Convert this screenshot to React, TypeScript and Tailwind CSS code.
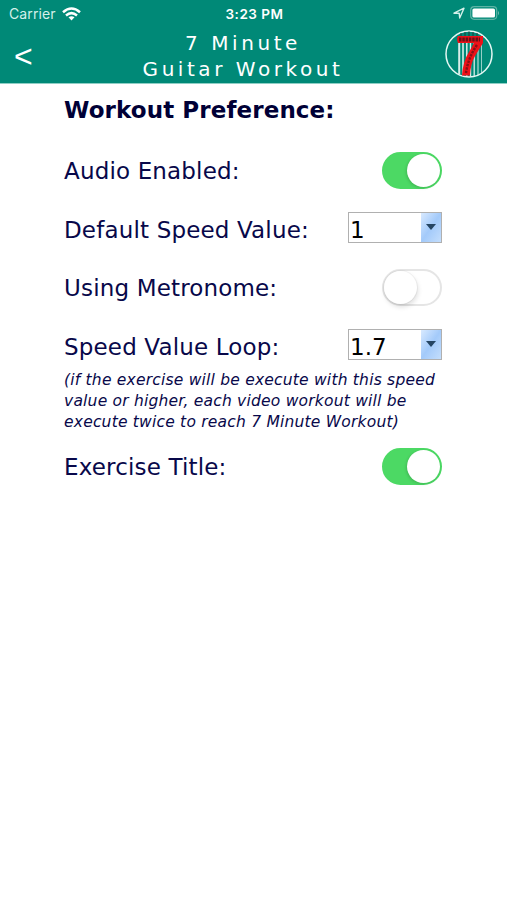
import React, { useState } from 'react';
import clsx from 'clsx';

interface ToggleProps {
  label: string;
  checked: boolean;
  onChange: (checked: boolean) => void;
}

const Toggle: React.FC<ToggleProps> = ({ label, checked, onChange }) => (
  <button
    type="button"
    role="switch"
    aria-label={label}
    aria-checked={checked}
    onClick={() => onChange(!checked)}
    className={clsx(
      'flex h-[37px] w-[60px] items-center rounded-full border-2',
      checked ? 'justify-end border-[#4cd964] bg-[#4cd964]' : 'justify-start border-[#e5e5e5] bg-white'
    )}
  >
    <span
      className={clsx(
        'size-[33px] rounded-full bg-white',
        checked
          ? 'shadow-[-1px_1px_3px_rgba(0,0,0,0.15)]'
          : 'shadow-[0_0_0_1px_rgba(0,0,0,0.04),1px_3px_5px_rgba(0,0,0,0.13)]'
      )}
    />
  </button>
);

const SpeedSelect: React.FC<{ value: string }> = ({ value }) => (
  <button
    type="button"
    className="mb-[4px] flex h-[31px] w-[94px] items-stretch border border-[#b0b0b0] bg-white"
  >
    <span className="flex-1 pl-px pt-[3px] text-left text-[23px] leading-[29px] text-black">{value}</span>
    <span className="flex w-5 items-center justify-center bg-linear-to-br from-[#d9eaff] via-[#a3cafa] to-[#c4defc]">
      <svg width="12" height="8" viewBox="0 0 12 8">
        <path d="M1 1h10L6 7z" fill="#254563" />
      </svg>
    </span>
  </button>
);

interface RowProps {
  label: string;
  children: React.ReactNode;
}

const Row: React.FC<RowProps> = ({ label, children }) => (
  <div className="flex h-[58.5px] items-center justify-between">
    <span className="whitespace-nowrap pt-px text-[23px] leading-7 tracking-[0.16px]">{label}</span>
    {children}
  </div>
);

const StatusBar: React.FC = () => (
  <div className="flex h-7 items-center justify-between pl-[9px] pr-[7px] font-[Inter,sans-serif] text-[14px] text-white">
    <div className="flex w-[90px] items-center gap-[6px] pb-px">
      <span className="tracking-[0.1px] text-[#d4f0ea]">Carrier</span>
      <svg width="19" height="14" viewBox="0 0 19 14" fill="none" stroke="white" strokeWidth="2.5" className="shrink-0">
        <path d="M1 5.2Q9.5 -2.2 18 5.2" />
        <path d="M4 8.5Q9.5 3.8 15 8.5" />
        <path d="M6.5 10.3Q9.5 8 12.5 10.3L9.5 13.5z" fill="white" stroke="none" />
      </svg>
    </div>
    <span className="text-[13.5px] font-semibold tracking-[0.5px]">3:23 PM</span>
    <div className="flex w-[90px] items-center justify-end gap-[5px] pb-[2px]">
      <svg width="12" height="12" viewBox="0 0 12 12" fill="none" stroke="#d4f0ea" strokeWidth="1.4" strokeLinejoin="round">
        <path d="M1 6.2L11 1.2L6.7 11L6.2 6.3z" />
      </svg>
      <svg width="30" height="14" viewBox="0 0 30 14">
        <rect x="0.7" y="0.7" width="26" height="12.6" rx="3.5" fill="none" stroke="#5db3a5" strokeWidth="1.2" />
        <rect x="2.4" y="2.4" width="22.6" height="9.2" rx="1.6" fill="white" />
        <path d="M28 4.7Q30 7 28 9.3z" fill="#70bbaf" />
      </svg>
    </div>
  </div>
);

const Logo: React.FC = () => (
  <svg width="50" height="50" viewBox="0 0 50 50" className="mb-1">
    <circle cx="25" cy="25" r="23" fill="none" stroke="#e4f7f3" strokeWidth="1.5" />
    {/* Guitar strings */}
    <g stroke="#d8eee9">
      <path d="M15.2 12V45" strokeWidth="2" />
      <path d="M19 12V46" strokeWidth="1.6" />
      <path d="M22.8 12V47" strokeWidth="1.5" />
      <path d="M26.5 12V47" strokeWidth="1.4" />
      <path d="M30.2 12V47" strokeWidth="1.3" />
      <path d="M34 12V46" strokeWidth="1" />
      <path d="M37.5 12V44" strokeWidth="0.7" />
    </g>
    <g stroke="#203b38" strokeWidth="1">
      <path d="M17 4V9M21 3V9M25 2.5V9M29 3V9M33 4V9" />
    </g>
    <path
      d="M14 7H39V14Q34 22 30.5 28Q26.5 35 26 46.5H18Q19 32 25 23L30 14H14Q12 10 14 7z"
      fill="#ed1118"
    />
    <path d="M15 10.5H36" stroke="#681117" strokeWidth="4" strokeDasharray="2.5 0.8" />
    <path d="M33 16Q24 29 22 44" fill="none" stroke="#851017" strokeWidth="2.4" strokeDasharray="2.5 1" />
  </svg>
);

export default function App() {
  const [audio, setAudio] = useState(true);
  const [metronome, setMetronome] = useState(false);
  const [exerciseTitle, setExerciseTitle] = useState(true);

  return (
    <div className="h-screen w-full overflow-hidden bg-white font-[Verdana,'DejaVu_Sans',sans-serif] text-[#08084a]">
      <header className="h-[84px] border-b border-[#8fcfc5] bg-[#008977]">
        <StatusBar />
        <div className="flex h-[55px] items-center justify-between px-[13px] text-white">
          <button
            type="button"
            aria-label="Back"
            className="w-[26px] pl-px text-left font-['Liberation_Sans',sans-serif] text-[32px] leading-none"
          >
            &lt;
          </button>
          <h1 className="pl-[3px] text-center text-[20px] leading-[26px] tracking-[3.55px]">
            7 Minute
            <br />
            Guitar Workout
          </h1>
          <Logo />
        </div>
      </header>

      <main className="ml-16 w-[378px]">
        <h2 className="pt-3 text-[23px] font-bold leading-7 tracking-[0.1px] text-[#000036]">Workout Preference:</h2>
        <div className="pt-[17.5px]">
          <Row label="Audio Enabled:">
            <Toggle label="Audio Enabled" checked={audio} onChange={setAudio} />
          </Row>
          <Row label="Default Speed Value:">
            <SpeedSelect value="1" />
          </Row>
          <Row label="Using Metronome:">
            <Toggle label="Using Metronome" checked={metronome} onChange={setMetronome} />
          </Row>
          <Row label="Speed Value Loop:">
            <SpeedSelect value="1.7" />
          </Row>
        </div>
        <p className="-mt-1.5 whitespace-nowrap text-[15.5px] italic leading-[21px] tracking-[0.21px]">
          (if the exercise will be execute with this speed
          <br />
          value or higher, each video workout will be
          <br />
          execute twice to reach 7 Minute Workout)
        </p>
        <div className="pt-[4.5px]">
          <Row label="Exercise Title:">
            <Toggle label="Exercise Title" checked={exerciseTitle} onChange={setExerciseTitle} />
          </Row>
        </div>
      </main>
    </div>
  );
}
